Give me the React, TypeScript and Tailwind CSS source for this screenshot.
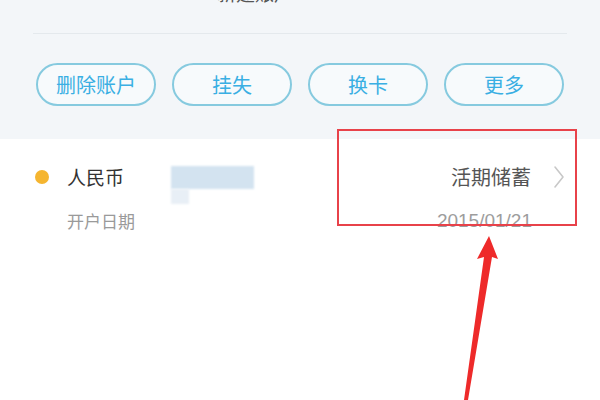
import * as React from 'react';

const actions = ['删除账户', '挂失', '换卡', '更多'];

function ActionButton({ label }: { label: string }) {
  return (
    <button className="flex h-[43px] w-[120px] items-center justify-center rounded-full border-2 border-[#86cadf] bg-[#f7fafc] text-[20px] text-[#3aafe3]">
      {label}
    </button>
  );
}

function Chevron() {
  return (
    <svg width="12" height="24" viewBox="0 0 12 24" fill="none">
      <path d="M2 2l8 10-8 10" stroke="#c8c8c8" strokeWidth="1.6" strokeLinecap="round" strokeLinejoin="round" />
    </svg>
  );
}

export default function App() {
  return (
    <div
      className="relative h-[400px] w-[600px] overflow-hidden bg-white"
      style={{ fontFamily: '"Noto Sans CJK SC", "Liberation Sans", sans-serif' }}
    >
      {/* Account header + actions */}
      <div className="flex h-[139px] flex-col bg-[#f3f6f9]">
        <div className="h-[34px] px-[33px]">
          <div className="h-full overflow-hidden border-b border-[#e4e9ed]">
            <div className="-mt-[17px] pl-[184px] text-[19px] leading-[19px] text-[#555]">新建账户</div>
          </div>
        </div>
        <div className="mt-[29px] flex gap-[16px] pl-[36px]">
          {actions.map((a) => (
            <ActionButton key={a} label={a} />
          ))}
        </div>
      </div>

      {/* Account row */}
      <div className="flex flex-col pl-[35px] pr-[35px] pt-[24px]">
        <div className="flex h-[28px] items-center">
          <span className="h-[14px] w-[14px] rounded-full bg-[#f5b530]" />
          <span className="ml-[18px] text-[19px] text-[#333]">人民币</span>
          <div className="relative ml-[47px] h-[23px] w-[83px]">
            <div className="h-full w-full bg-[#d3e3f0] blur-[1px]" />
            <div className="absolute left-0 top-[23px] h-[15px] w-[18px] bg-[#e8eff6] blur-[1px]" />
          </div>
          <div className="flex-1" />
          <span className="text-[20px] text-[#555]">活期储蓄</span>
          <span className="ml-[22px] flex items-center">
            <Chevron />
          </span>
        </div>
        <div className="mt-[16px] flex h-[28px] items-center">
          <span className="ml-[32px] text-[17px] text-[#9a9a9a]">开户日期</span>
          <div className="flex-1" />
          <span
            className="mr-[33px] text-[19px] text-[#9d9d9d]"
            style={{ fontFamily: '"Liberation Sans", Arial, sans-serif' }}
          >
            2015/01/21
          </span>
        </div>
      </div>

      {/* Annotation: red box */}
      <div className="absolute left-[337px] top-[129px] h-[97px] w-[240px] border-2 border-[#e8424a]" />

      {/* Annotation: red arrow */}
      <svg className="absolute left-0 top-0" width="600" height="400" viewBox="0 0 600 400">
        <polygon
          points="489,236 477,259 484,257 464,400 468,400 492,257 498,259"
          fill="#ee2a2a"
        />
      </svg>
    </div>
  );
}
